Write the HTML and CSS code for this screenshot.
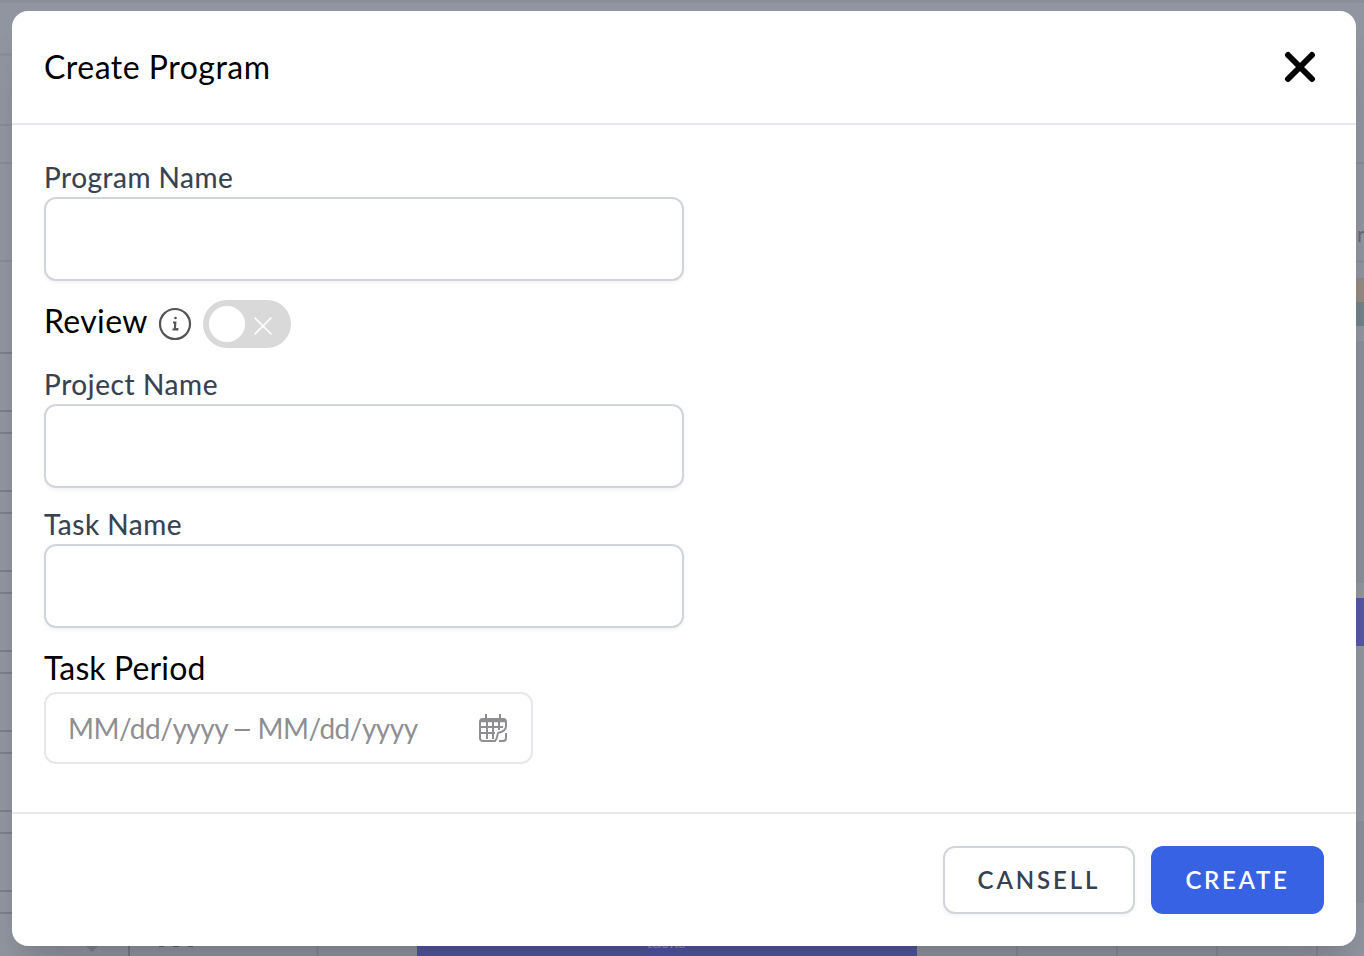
FILE: index.html
```
<!DOCTYPE html>
<html lang="en">
<head>
<meta charset="utf-8">
<title>Create Program</title>
<link rel="stylesheet" href="styles.css">
</head>
<body>
<svg class="backdrop" viewBox="0 0 1364 956" aria-hidden="true">
  <rect width="1364" height="956" fill="#9195a0"/>
  <path d="M0 1H1364" stroke="#8b8e99" stroke-width="3"/>
  <path d="M0 54.500H14M0 125H14M0 163H14M0 261H14M1354 261.500H1364M1354 163H1364" stroke="#888b96" stroke-width="2"/>
  <path d="M0 353H14M0 411H14M0 433H14M0 491H14M0 513H14M0 571H14M0 593H14M0 651H14M0 673H14M0 731H14M0 753H14M0 811H14M0 833H14M0 891H14M0 913H14" stroke="#7b7e89" stroke-width="2"/>
  <text class="backdrop-text" x="1357" y="242">r</text>
  <rect x="1354" y="278" width="10" height="24" fill="#938a80"/>
  <rect x="1354" y="302" width="10" height="24" fill="#718389"/>
  <rect x="1354" y="341" width="10" height="242" fill="#8b8f9a"/>
  <rect x="1354" y="583" width="10" height="78" fill="#91959e"/>
  <rect x="1354" y="598" width="10" height="48" fill="#5558a3"/>
  <rect x="1354" y="821" width="10" height="82" fill="#8b8f9a"/>
  <path d="M129 944V956" stroke="#767983" stroke-width="2"/>
  <path d="M317.500 944V956M1017 944V956M1117 944V956M1217 944V956M1317 944V956" stroke="#878a94" stroke-width="2"/>
  <path d="M84 944H100L92 952Z" fill="#7f828b"/>
  <path d="M159 946H164M173 946H179M188 946H193" stroke="#5f626b" stroke-width="2"/>
  <rect x="417" y="944" width="500" height="12" fill="#5155a1"/>
  <text class="backdrop-tag" x="646" y="948">tasks</text>
</svg>
<main class="modal" role="dialog" aria-labelledby="title">
  <header class="modal-header">
    <h1 class="title" id="title">Create Program</h1>
    <svg class="close" viewBox="0 0 32 32"><path d="M4 4L28 28M28 4L4 28"/></svg>
  </header>
  <form class="modal-body">
    <label class="field"><span class="label">Program Name</span><input class="input" type="text"></label>
    <div class="review">
      <span class="text review-text">Review</span>
      <svg class="info" viewBox="0 0 34 34"><circle cx="17" cy="17" r="15"/><path d="M15 15.500H17.300L16.800 22.500M14.500 22.500H19.300V21"/><circle class="dot" cx="17.500" cy="11" r="1.300"/></svg>
      <span class="switch"><span class="knob"></span><svg class="off" viewBox="0 0 20 20"><path d="M1.500 1.500L18.500 18.500M18.500 1.500L1.500 18.500"/></svg></span>
    </div>
    <label class="field"><span class="label project">Project Name</span><input class="input" type="text"></label>
    <label class="field task"><span class="label">Task Name</span><input class="input" type="text"></label>
    <div class="period">
      <span class="text period-text">Task Period</span>
      <div class="date"><span class="date-text">MM/dd/yyyy <span class="dash">–</span> MM/dd/yyyy</span>
        <svg class="calendar" viewBox="0 0 30 30"><path d="M8 1V6M22 1V6M5 6H25Q28 6 28 9V13Q28 18 21 19.500Q20 19.500 19.500 22Q19 26 17 28H5Q2 28 2 25V9Q2 6 5 6M2 14H25M2 20H17M9 9V26M15 9V26M21 9V17M28 20V25Q28 28 25 28H21"/><path class="bar" d="M2.500 7.500H27.500"/></svg>
      </div>
    </div>
  </form>
  <footer class="modal-footer">
    <button class="button cancel" type="button">CANSELL</button>
    <button class="button create" type="button">CREATE</button>
  </footer>
</main>
</body>
</html>
```

FILE: styles.css
```
* { box-sizing: border-box; }
body { margin: 0; width: 1364px; height: 956px; overflow: hidden; padding: 11px 8px 10px 12px; font-family: Lato, "Open Sans", sans-serif; color: #000; }
.backdrop { position: absolute; inset: 0; width: 1364px; height: 956px; z-index: -1; }
.backdrop-text { font-size: 21px; fill: #666974; }
.backdrop-tag { font-size: 18px; fill: #8b8e9b; }
.modal { height: 935px; display: flex; flex-direction: column; background: #fff; border-radius: 16px; box-shadow: 0 40px 50px -10px rgba(0,0,0,.1), 0 16px 20px -12px rgba(0,0,0,.1); }
.modal-header { height: 114px; padding: 0 40px 0 32px; display: flex; align-items: center; justify-content: space-between; border-bottom: 2px solid #e5e7eb; }
.title, .text { margin: 0; font-size: 32px; line-height: 48px; font-weight: 400; white-space: nowrap; }
.title { letter-spacing: .5px; }
.close { width: 32px; height: 32px; fill: none; stroke: #000; stroke-width: 6; stroke-linecap: round; }
.modal-body { flex: 1; padding: 32px 32px 0; }
.field { display: block; width: 640px; }
.label { display: block; height: 40px; line-height: 40px; font-size: 28px; font-weight: 400; -webkit-text-stroke: .15px #374151; color: #374151; letter-spacing: .5px; white-space: nowrap; }
.project { letter-spacing: .6px; }
.input { display: block; width: 100%; height: 84px; border: 2px solid #d1d5db; border-radius: 12px; background: #fff; box-shadow: 0 2px 4px rgba(0,0,0,.05); }
.review { height: 83px; padding-top: 3px; display: flex; align-items: center; }
.review-text { width: 114px; margin-top: -6px; letter-spacing: .35px; }
.info { width: 34px; height: 34px; fill: none; stroke: #555; stroke-width: 2.2; }
.info .dot { fill: #555; stroke: none; }
.switch { width: 88px; height: 48px; margin-left: 11px; padding: 0 18px 0 6px; display: flex; align-items: center; justify-content: space-between; border-radius: 24px; background: #d9d9d9; }
.knob { width: 36px; height: 36px; border-radius: 50%; background: #fff; }
.off { width: 20px; height: 20px; margin-top: 4px; fill: none; stroke: #fff; stroke-width: 1.6; }
.task { margin-top: 16px; }
.period { margin-top: 16px; }
.period-text { display: block; letter-spacing: .12px; }
.date { width: 489px; height: 72px; padding: 0 23px 0 22px; display: flex; align-items: center; justify-content: space-between; border: 2px solid #e5e7eb; border-radius: 12px; }
.date-text { font-size: 28px; letter-spacing: -.5px; color: #8e8e93; white-space: nowrap; }
.dash { display: inline-block; margin-right: 1px; transform: scaleX(1.35); }
.calendar { width: 30px; height: 30px; fill: none; stroke: #8e8e93; stroke-width: 2; }
.calendar .bar { stroke-width: 3.5; }
.modal-footer { height: 134px; padding: 0 32px; display: flex; align-items: center; justify-content: flex-end; gap: 16px; border-top: 2px solid #e5e7eb; }
.button { height: 68px; padding: 0; border-radius: 12px; font: 600 24px/32px Lato, sans-serif; letter-spacing: 2.9px; }
.cancel { width: 192px; border: 2px solid #d1d5db; background: #fff; color: #374151; box-shadow: 0 2px 4px rgba(0,0,0,.05); }
.create { width: 173px; border: 0; background: #3762e4; color: #fff; letter-spacing: 2.7px; }
```
